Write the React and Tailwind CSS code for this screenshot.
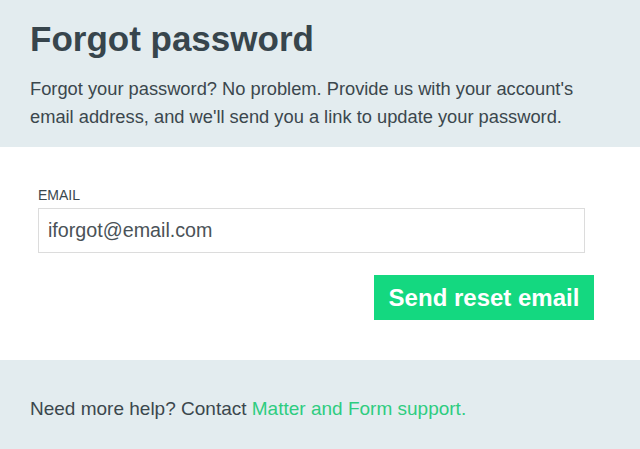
import React from 'react';

export default function App() {
  return (
    <div
      className="min-h-screen bg-white text-[#3b474d]"
      style={{ fontFamily: '"Liberation Sans", Arial, sans-serif' }}
    >
      {/* Header */}
      <div className="bg-[#e3ecef] px-[30px] pt-[17px] h-[147px]">
        <h1 className="text-[35px] leading-[44px] font-bold text-[#37454c]">Forgot password</h1>
        <p className="mt-[14px] text-[18.3px] leading-[28px] text-[#3b474d]">
          Forgot your password? No problem. Provide us with your account's email address, and we'll send you a link to update your password.
        </p>
      </div>

      {/* Form */}
      <form className="h-[213px] px-[38px] pt-[40px]" onSubmit={(e) => e.preventDefault()}>
        <label htmlFor="email" className="block text-[14px] leading-[16px] uppercase text-[#3b474d]">
          Email
        </label>
        <input
          id="email"
          type="email"
          defaultValue="iforgot@email.com"
          className="mt-[5px] block w-[547px] h-[45px] border border-[#dcdcdc] px-[9px] text-[19.7px] text-[#4a5257] outline-none"
        />
        <div className="flex justify-end w-[556px] mt-[22px]">
          <button
            type="submit"
            className="w-[220px] h-[45px] bg-[#14d880] text-white font-bold text-[24px]"
          >
            Send reset email
          </button>
        </div>
      </form>

      {/* Footer */}
      <div className="bg-[#e3ecef] px-[30px] h-[89px] flex items-center pt-[10px]">
        <p className="text-[19px] text-[#3b474d]">
          Need more help? Contact <a href="#" className="text-[#2ecc80]">Matter and Form support.</a>
        </p>
      </div>
    </div>
  );
}
